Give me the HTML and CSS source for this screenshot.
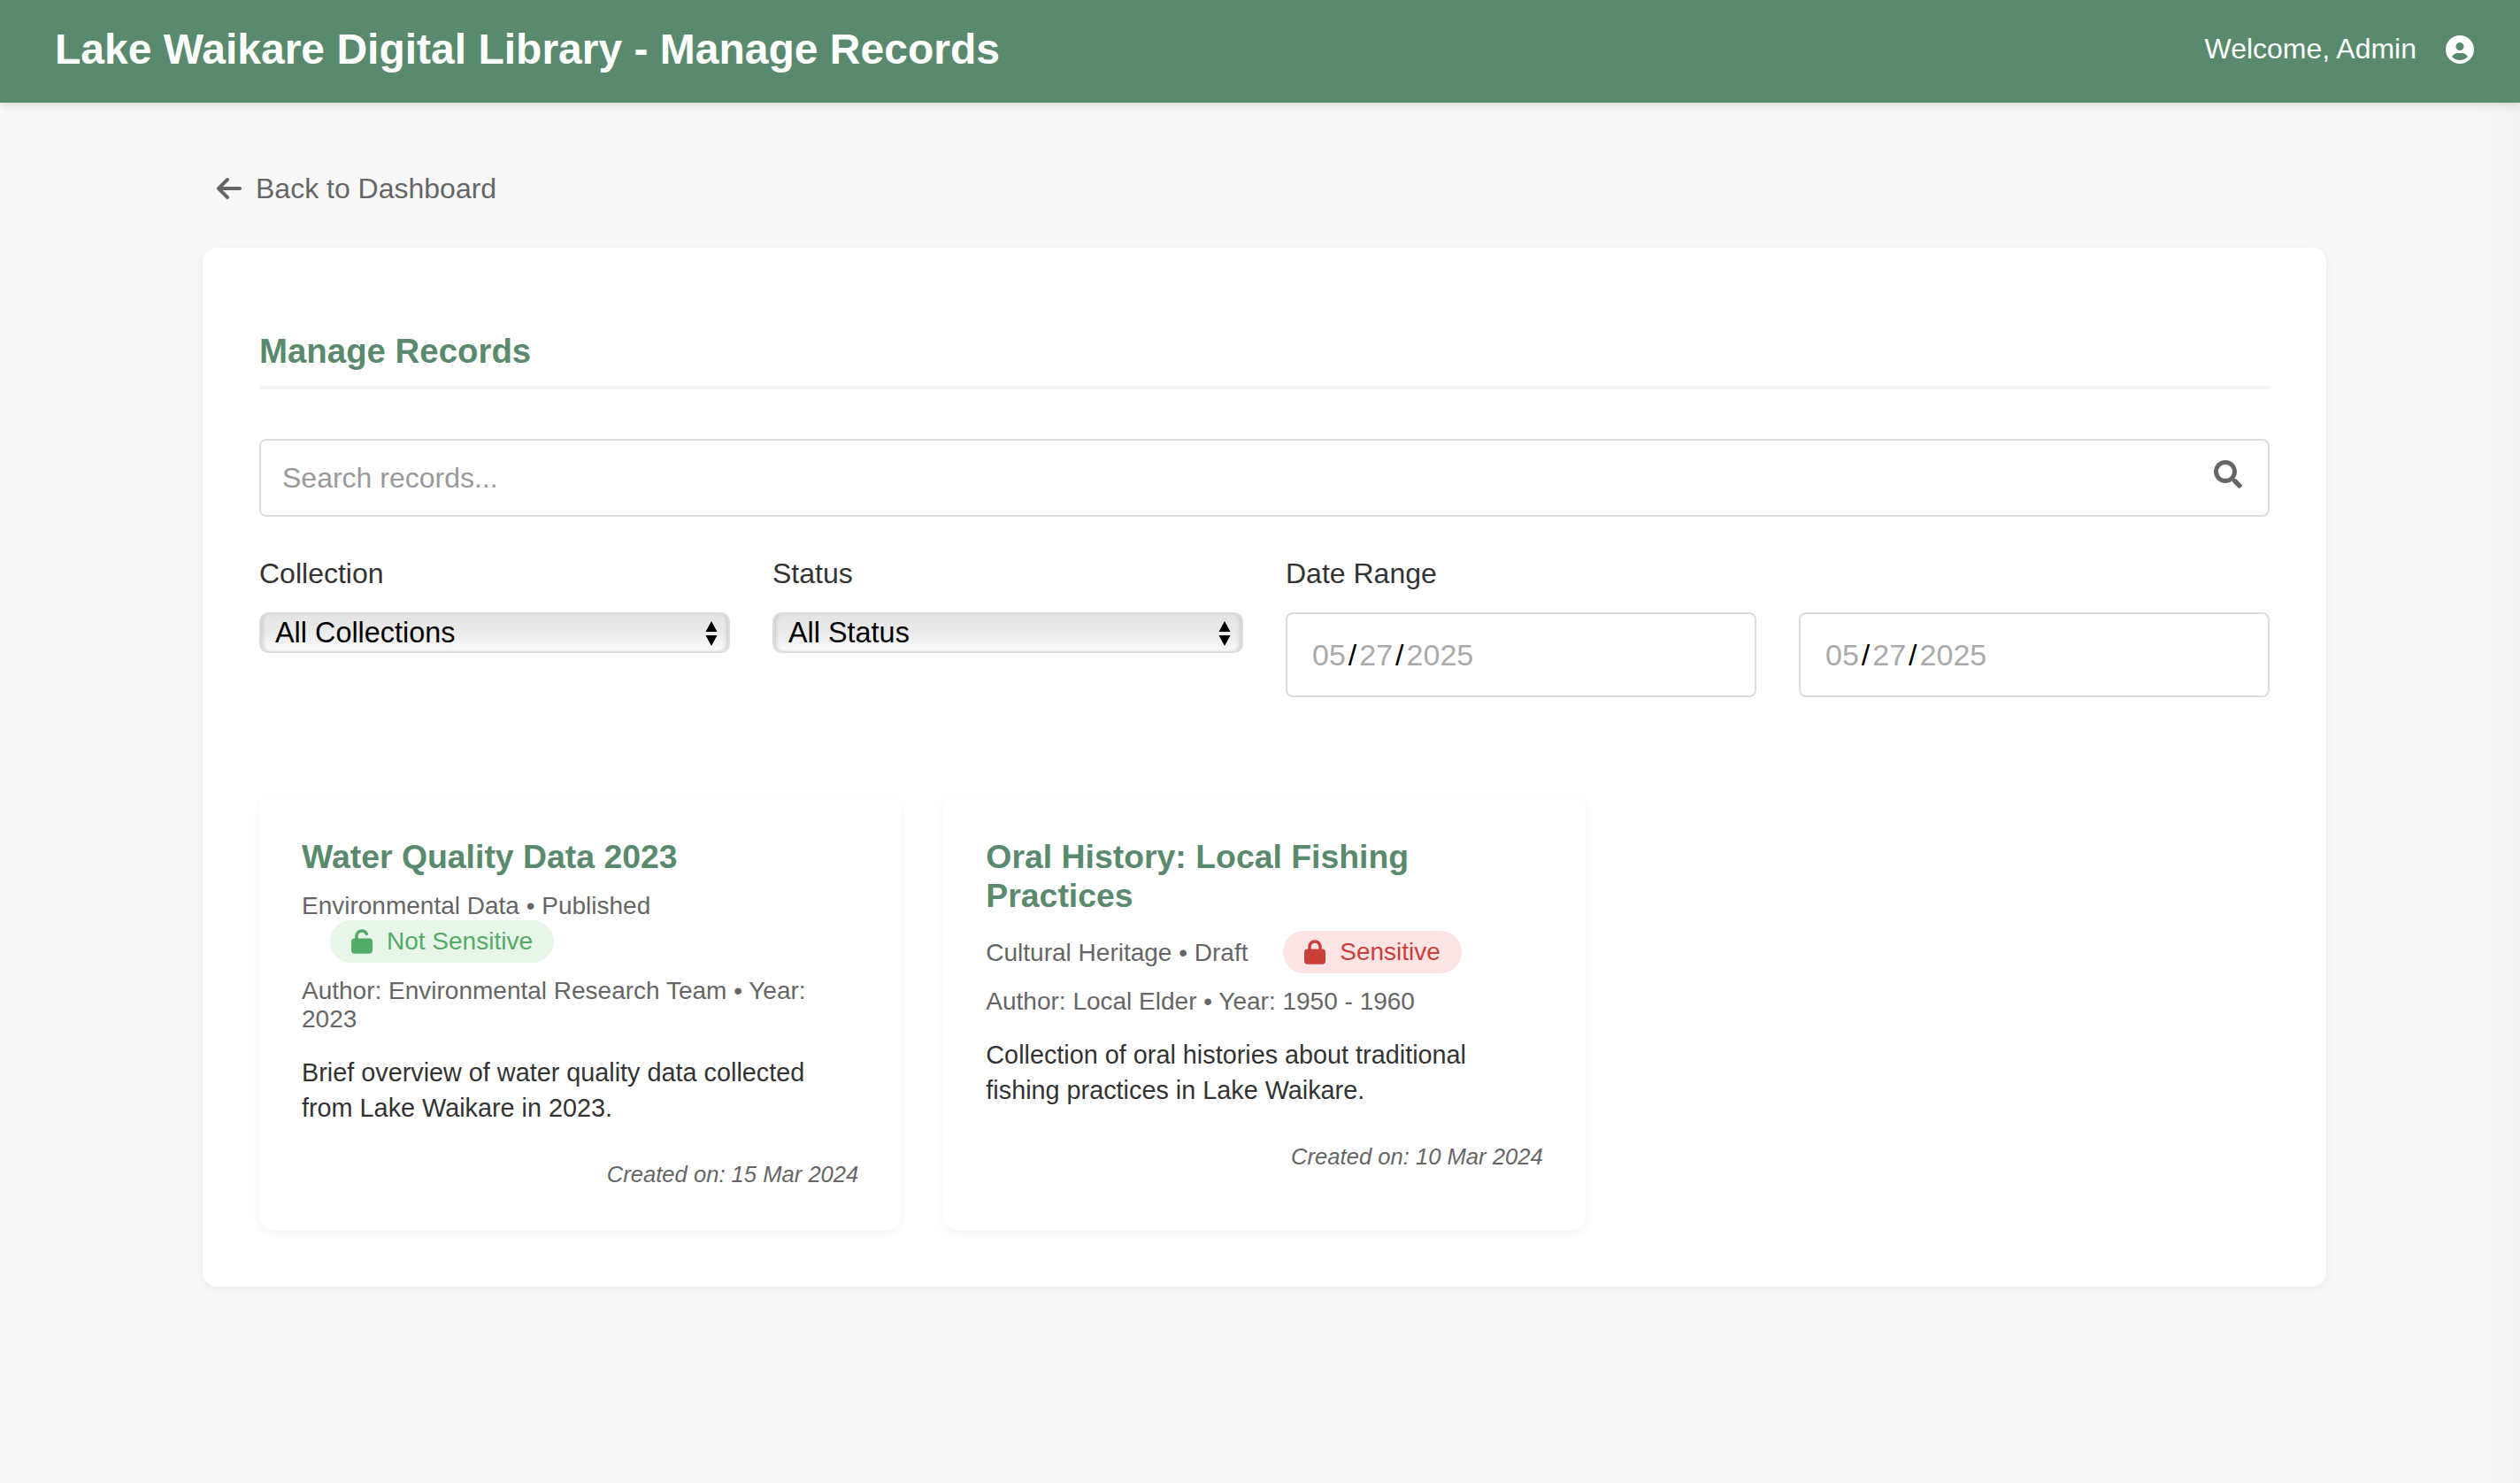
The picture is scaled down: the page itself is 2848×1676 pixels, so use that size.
FILE: index.html
```html
<!DOCTYPE html>
<html lang="en">

<head>
    <meta charset="UTF-8">
    <title>Manage Records - Lake Waikare Digital Library</title>
    <link rel="stylesheet" href="styles.css">
</head>

<body>

    <header class="topbar">
        <h1 class="topbar-title">Lake Waikare Digital Library - Manage Records</h1>
        <div class="topbar-user">
            <span class="topbar-welcome">Welcome, Admin</span>
            <svg class="user-icon" viewBox="0 0 512 512">
                <path fill="#fff" d="M399 384.2C376.9 345.8 335.4 320 288 320H224c-47.4 0-88.9 25.8-111 64.2c35.2 39.2 86.2 63.8 143 63.8s107.8-24.7 143-63.8zM0 256a256 256 0 1 1 512 0A256 256 0 1 1 0 256zm256 16a72 72 0 1 0 0-144 72 72 0 1 0 0 144z"/>
            </svg>
        </div>
    </header>

    <main class="container">
        <a class="back-link" href="#">
            <svg class="back-icon" viewBox="0 0 448 512">
                <path fill="#666" d="M9.4 233.4c-12.5 12.5-12.5 32.8 0 45.3l160 160c12.5 12.5 32.8 12.5 45.3 0s12.5-32.8 0-45.3L109.2 288H416c17.7 0 32-14.3 32-32s-14.3-32-32-32H109.3l105.3-105.4c12.5-12.5 12.5-32.8 0-45.3s-32.8-12.5-45.3 0l-160 160z"/>
            </svg>
            Back to Dashboard
        </a>

        <section class="panel">
            <h2 class="panel-title">Manage Records</h2>

            <div class="search-box">
                <input class="search-input" type="text" placeholder="Search records...">
                <svg class="search-icon" viewBox="0 0 512 512">
                    <path fill="#666" d="M505 443l-100-100c-4-4-10-7-17-7h-16c28-35 44-80 44-128C416 93 323 0 208 0S0 93 0 208s93 208 208 208c48 0 93-16 128-44v16c0 7 3 13 7 17l100 100c9 9 25 9 34 0l28-28c9-10 9-25 0-34zM208 336a128 128 0 1 1 0-256 128 128 0 0 1 0 256z"/>
                </svg>
            </div>

            <div class="filters">
                <div class="filter">
                    <label class="filter-label">Collection</label>
                    <div class="select-wrap">
                        <select class="filter-select">
                            <option>All Collections</option>
                        </select>
                        <svg class="select-arrows" viewBox="0 0 14 28">
                            <path d="M7 0l6.5 12H.5zM7 28L.5 16h13z"/>
                        </svg>
                    </div>
                </div>
                <div class="filter">
                    <label class="filter-label">Status</label>
                    <div class="select-wrap">
                        <select class="filter-select">
                            <option>All Status</option>
                        </select>
                        <svg class="select-arrows" viewBox="0 0 14 28">
                            <path d="M7 0l6.5 12H.5zM7 28L.5 16h13z"/>
                        </svg>
                    </div>
                </div>
                <div class="filter">
                    <label class="filter-label">Date Range</label>
                    <div class="date-field"><span>05</span><b>/</b><span>27</span><b>/</b><span>2025</span></div>
                </div>
                <div class="filter">
                    <label class="filter-label">&nbsp;</label>
                    <div class="date-field"><span>05</span><b>/</b><span>27</span><b>/</b><span>2025</span></div>
                </div>
            </div>

            <div class="records">
                <article class="record">
                    <h3 class="record-title">Water Quality Data 2023</h3>
                    <div class="record-meta">
                        Environmental Data • Published
                        <span class="badge badge-open">
                            <svg class="badge-icon" viewBox="0 0 448 512">
                                <path d="M144 144c0-44.2 35.8-80 80-80c31.9 0 59.4 18.6 72.3 45.7c7.6 16 26.7 22.8 42.6 15.2s22.8-26.7 15.2-42.6C331 33.7 281.5 0 224 0C144.5 0 80 64.5 80 144v48H64c-35.3 0-64 28.7-64 64V448c0 35.3 28.7 64 64 64H384c35.3 0 64-28.7 64-64V256c0-35.3-28.7-64-64-64H144V144z"/>
                            </svg>
                            Not Sensitive
                        </span>
                    </div>
                    <div class="record-meta">Author: Environmental Research Team • Year: 2023</div>
                    <p class="record-text">Brief overview of water quality data collected from Lake Waikare in 2023.</p>
                    <div class="record-date">Created on: 15 Mar 2024</div>
                </article>

                <article class="record">
                    <h3 class="record-title">Oral History: Local Fishing Practices</h3>
                    <div class="record-meta">
                        Cultural Heritage • Draft
                        <span class="badge badge-locked">
                            <svg class="badge-icon" viewBox="0 0 448 512">
                                <path d="M144 144v48H304V144c0-44.2-35.8-80-80-80s-80 35.8-80 80zM80 192V144C80 64.5 144.5 0 224 0s144 64.5 144 144v48h16c35.3 0 64 28.7 64 64V448c0 35.3-28.7 64-64 64H64c-35.3 0-64-28.7-64-64V256c0-35.3 28.7-64 64-64H80z"/>
                            </svg>
                            Sensitive
                        </span>
                    </div>
                    <div class="record-meta">Author: Local Elder • Year: 1950 - 1960</div>
                    <p class="record-text">Collection of oral histories about traditional fishing practices in Lake Waikare.</p>
                    <div class="record-date">Created on: 10 Mar 2024</div>
                </article>
            </div>
        </section>
    </main>

</body>

</html>
```

FILE: styles.css
```css
* {
    box-sizing: border-box;
}

body {
    margin: 0;
    min-height: 1676px;
    font-family: "Liberation Sans", Arial, sans-serif;
    font-size: 32px;
    line-height: 1.5;
    color: #333;
    background: linear-gradient(to right, #f8f8f8 calc(100% - 70px), #f3f3f3);
}

.topbar {
    height: 116px;
    padding: 0 52px 4px 62px;
    display: flex;
    align-items: center;
    justify-content: space-between;
    color: #fff;
    background-color: #5a8a6d;
    box-shadow: 0 4px 8px rgba(0, 0, 0, 0.1);
}

.topbar-title {
    margin: 0;
    font-size: 48px;
    line-height: 1.2;
    font-weight: bold;
}

.topbar-user {
    display: flex;
    align-items: center;
    gap: 33px;
}

.topbar-welcome {
    margin-bottom: 2px;
}

.user-icon {
    width: 32px;
    height: 32px;
}

.container {
    width: 2400px;
    margin-left: 229px;
    padding-top: 73px;
}

.back-link {
    display: flex;
    align-items: center;
    gap: 16px;
    margin-left: 16px;
    margin-bottom: 43px;
    height: 48px;
    color: #666;
    text-decoration: none;
}

.back-icon {
    width: 28px;
    height: 32px;
}

.panel {
    padding: 64px;
    background: #fff;
    border-radius: 16px;
    box-shadow: 0 4px 12px rgba(0, 0, 0, 0.05);
}

.panel-title {
    margin: 30px 0 56px;
    padding-bottom: 16px;
    font-size: 38.4px;
    line-height: 46px;
    color: #5a8a6d;
    border-bottom: 4px solid #f5f5f5;
}

.search-box {
    position: relative;
    margin-bottom: 40px;
}

.search-input {
    display: block;
    width: 100%;
    height: 88px;
    padding: 0 24px;
    font: inherit;
    color: #333;
    border: 2px solid #ddd;
    border-radius: 8px;
    outline: none;
}

.search-input::placeholder {
    color: #999;
}

.search-icon {
    position: absolute;
    top: 24px;
    right: 31px;
    width: 32px;
    height: 32px;
}

.filters {
    display: grid;
    grid-template-columns: repeat(4, 1fr);
    gap: 48px;
    align-items: start;
    margin-bottom: 110px;
}

.filter-label {
    display: block;
    margin-bottom: 20px;
    line-height: 48px;
    color: #333;
}

.select-wrap {
    position: relative;
}

.filter-select {
    display: block;
    width: 100%;
    height: 46px;
    padding: 0 16px;
    font: inherit;
    font-size: 32.4px;
    line-height: 42px;
    color: #000;
    appearance: none;
    border: 2px solid #ddd;
    border-radius: 10px;
    background: linear-gradient(#e4e4e4, #e9e9e9 45%, #fafafa);
    box-shadow: inset 4px 0 4px -2px #ccc, inset -4px 0 4px -2px #ccc;
}

.select-arrows {
    position: absolute;
    top: 10px;
    right: 14px;
    width: 14px;
    height: 28px;
    pointer-events: none;
}

.date-field {
    display: flex;
    align-items: center;
    height: 96px;
    padding: 0 28px;
    font-size: 34px;
    color: #aaa;
    background: #fff;
    border: 2px solid #ddd;
    border-radius: 8px;
}

.date-field b {
    margin: 0 3px;
    font-weight: normal;
    color: #000;
}

.records {
    display: grid;
    grid-template-columns: repeat(3, 1fr);
    gap: 48px;
}

.record {
    padding: 48px 48px 47px;
    background: #fff;
    border-radius: 16px;
    box-shadow: 0 4px 12px rgba(0, 0, 0, 0.05);
}

.record-title {
    margin: 0 0 18px;
    font-size: 37.4px;
    line-height: 44px;
    color: #5a8a6d;
}

.record-meta {
    margin-bottom: 16px;
    font-size: 28px;
    line-height: 32px;
    color: #666;
}

.badge {
    display: inline-flex;
    align-items: center;
    gap: 16px;
    height: 48px;
    margin-left: 32px;
    padding: 0 24px;
    border-radius: 24px;
    vertical-align: -4px;
}

.badge-icon {
    width: 24px;
    height: 28px;
    fill: currentColor;
}

.badge-open {
    color: #52ab67;
    background: #e8f5e9;
}

.badge-locked {
    color: #c9403a;
    background: #fce4e4;
}

.record-text {
    margin: 24px 0 39px;
    font-size: 28.8px;
    line-height: 40px;
    color: #333;
}

.record-date {
    font-size: 25.6px;
    line-height: 32px;
    font-style: italic;
    text-align: right;
    color: #666;
}
```
